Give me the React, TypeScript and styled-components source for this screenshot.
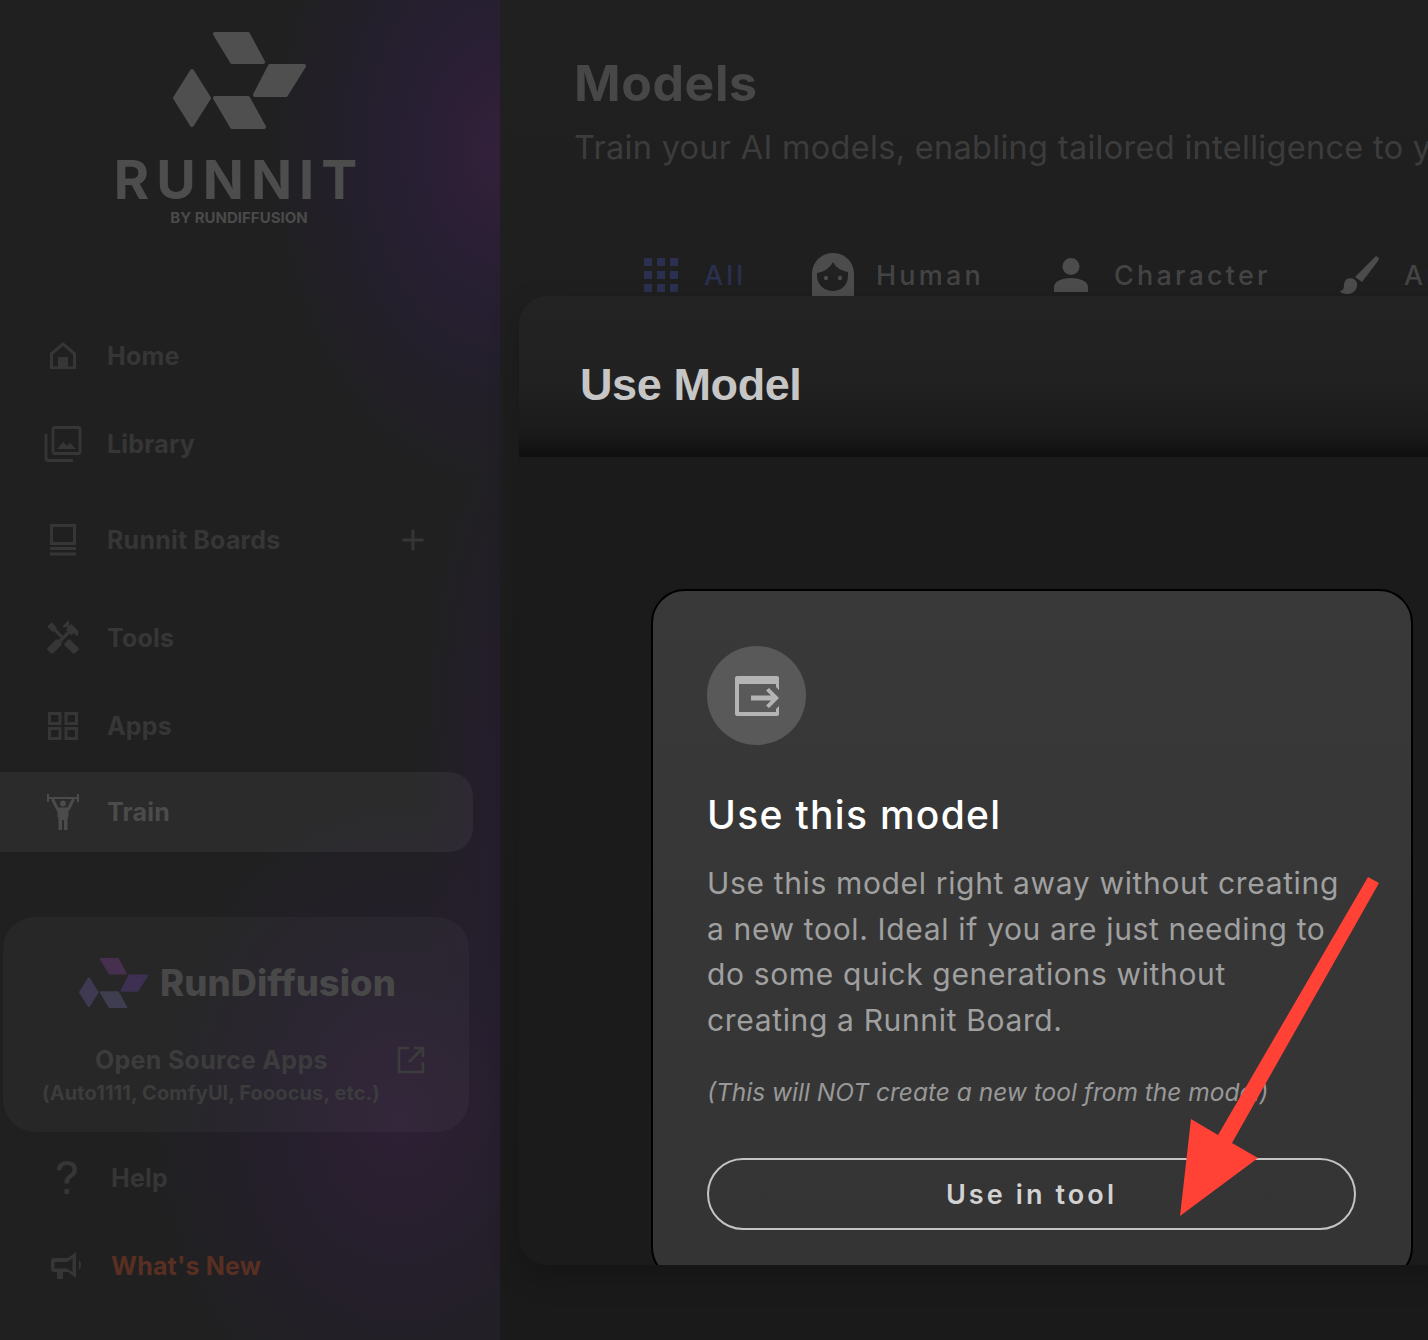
import styled, { createGlobalStyle } from "styled-components";
import { Plus } from "lucide-react";

const GlobalStyle = createGlobalStyle`
  html, body { margin: 0; padding: 0; background: #1e1e1f; }
  body { font-family: "Inter", "Liberation Sans", sans-serif; }
  * { box-sizing: border-box; }
`;

const Page = styled.div`
  position: relative;
  display: flex;
  width: 1428px;
  height: 1340px;
  overflow: hidden;
`;

const Sidebar = styled.aside`
  width: 500px;
  flex: none;
  display: flex;
  flex-direction: column;
  background:
    radial-gradient(ellipse 230px 340px at 500px 150px, #33203a 0%, rgba(40, 30, 55, 0.75) 45%, rgba(33, 32, 36, 0) 100%),
    radial-gradient(ellipse 250px 320px at 400px 1120px, #2e1f35 0%, rgba(40, 30, 50, 0.6) 50%, rgba(33, 32, 36, 0) 100%),
    radial-gradient(ellipse 90px 380px at 510px 800px, #261d30 0%, rgba(33, 32, 36, 0) 100%),
    #202021;
`;

const Brand = styled.div`
  height: 312px;
  padding-top: 32px;
  display: flex;
  flex-direction: column;
  align-items: center;
  padding-right: 22px;
`;

const LogoWord = styled.div`
  font-family: "Inter", sans-serif;
  font-weight: 700;
  font-size: 54px;
  line-height: 42px;
  letter-spacing: 7px;
  color: #4d4d4d;
  margin-top: 30px;
`;

const LogoSub = styled.div`
  font-family: "Inter", sans-serif;
  font-weight: 700;
  font-size: 15px;
  line-height: 18px;
  color: #4a4a4a;
  margin-top: 8px;
`;

const Nav = styled.nav`
  display: flex;
  flex-direction: column;
`;

const NavItem = styled.div<{ $height: number; $active?: boolean; $indent?: number; $after?: number }>`
  display: flex;
  align-items: center;
  width: 473px;
  height: ${({ $height }) => $height}px;
  margin-bottom: ${({ $after }) => $after ?? 0}px;
  padding-left: ${({ $indent }) => $indent ?? 44}px;
  padding-right: 44px;
  border-radius: 0 24px 24px 0;
  background: ${({ $active }) => ($active ? "rgba(255, 255, 255, 0.05)" : "transparent")};
  color: ${({ $active }) => ($active ? "#4b4b4b" : "#363637")};
`;

const NavIcon = styled.span`
  width: 38px;
  height: 38px;
  flex: none;
  display: flex;
  align-items: center;
  justify-content: center;
  margin-right: 25px;
`;

const NavLabel = styled.span<{ $accent?: boolean }>`
  flex: 1;
  font-family: "Inter", sans-serif;
  font-size: 25px;
  font-weight: 700;
  letter-spacing: 0.2px;
  color: ${({ $accent }) => ($accent ? "#592f22" : "inherit")};
`;

const PromoCard = styled.div`
  margin: 65px 0 0 3px;
  width: 466px;
  height: 215px;
  border-radius: 32px;
  background: rgba(255, 255, 255, 0.03);
  display: flex;
  flex-direction: column;
  align-items: center;
  padding-top: 41px;
`;

const PromoBrand = styled.div`
  display: flex;
  align-items: center;
  gap: 12px;
  margin-left: 3px;
`;

const PromoName = styled.span`
  font-family: "Inter", sans-serif;
  font-size: 36.5px;
  font-weight: 800;
  line-height: 50px;
  color: #484848;
`;

const PromoLine = styled.div`
  display: flex;
  align-items: center;
  width: 100%;
  margin-top: 34px;
  padding: 0 44px 0 92px;
  justify-content: space-between;
  color: #3c3c3d;
`;

const PromoTitle = styled.span`
  font-size: 25px;
  font-weight: 700;
  letter-spacing: 0.3px;
  line-height: 36px;
`;

const PromoNote = styled.div`
  font-size: 20px;
  font-weight: 700;
  letter-spacing: 0.1px;
  line-height: 28px;
  color: #3c3c3d;
  margin-top: 1px;
  margin-right: 50px;
`;

const Main = styled.main`
  flex: 1;
  min-width: 0;
  padding: 52px 0 0 74px;
  white-space: nowrap;
  background: linear-gradient(180deg, #202020 0%, #1e1e1e 40%, #1a1a1a 100%);
`;

const PageTitle = styled.h1`
  margin: 0;
  font-family: "Inter", sans-serif;
  font-size: 50px;
  font-weight: 700;
  line-height: 62px;
  letter-spacing: 0.6px;
  color: #474747;
`;

const PageSub = styled.p`
  margin: 4px 0 0;
  font-size: 32.5px;
  font-weight: 400;
  line-height: 60px;
  letter-spacing: 0.3px;
  color: #3c3c3c;
`;

const Tabs = styled.div`
  display: flex;
  align-items: center;
  margin-top: 75px;
  padding-left: 70px;
`;

const Tab = styled.div<{ $gap: number; $width: number; $color?: string }>`
  display: flex;
  align-items: center;
  flex: none;
  width: ${({ $width }) => $width}px;
  gap: ${({ $gap }) => $gap}px;
  font-family: "Inter", sans-serif;
  font-size: 27px;
  font-weight: 500;
  letter-spacing: 3.2px;
  color: ${({ $color }) => $color ?? "#444445"};
`;

const Modal = styled.section`
  position: absolute;
  left: 519px;
  top: 296px;
  width: 1000px;
  height: 969px;
  overflow: hidden;
  border-radius: 28px 0 0 28px;
  background: #1b1b1b;
  box-shadow: 0 12px 30px rgba(0, 0, 0, 0.22);
`;

const ModalHeader = styled.header`
  height: 161px;
  display: flex;
  align-items: center;
  padding-left: 61px;
  background: linear-gradient(180deg, #232323 0%, #212121 55%, #1a1a1a 85%, #0f0f0f 100%);
`;

const ModalTitle = styled.h2`
  margin: 0;
  font-family: "Liberation Sans", sans-serif;
  font-size: 45px;
  font-weight: 700;
  letter-spacing: -0.4px;
  color: #c6c6c6;
  position: relative;
  top: 8px;
`;

const ModalBody = styled.div`
  padding: 132px 0 0 132px;
`;

const OptionCard = styled.article`
  width: 762px;
  height: 692px;
  padding: 55px 54px;
  border: 2px solid #000000;
  border-radius: 34px;
  background: linear-gradient(180deg, #393939 0%, #373737 30%, #343434 100%);
`;

const IconCircle = styled.div`
  width: 99px;
  height: 99px;
  border-radius: 50%;
  background: #595959;
  display: flex;
  align-items: center;
  justify-content: center;
`;

const OptionTitle = styled.h3`
  margin: 42px 0 0;
  font-family: "Inter", sans-serif;
  font-size: 39px;
  font-weight: 500;
  line-height: 56px;
  letter-spacing: 1.3px;
  color: #ffffff;
`;

const OptionText = styled.p`
  margin: 18px 0 0;
  width: 636px;
  font-size: 30px;
  font-weight: 400;
  line-height: 45.6px;
  letter-spacing: 0.65px;
  color: #a0a0a0;
`;

const OptionNote = styled.p`
  margin: 31px 0 0;
  font-size: 24.5px;
  font-style: italic;
  line-height: 36px;
  color: #989898;
  white-space: nowrap;
`;

const ActionButton = styled.button`
  display: block;
  width: 649px;
  height: 72px;
  margin-top: 48px;
  border: 2px solid #c4c4c4;
  border-radius: 36px;
  background: transparent;
  font-family: "Inter", sans-serif;
  font-size: 27px;
  font-weight: 600;
  letter-spacing: 3.1px;
  color: #d2d2d2;
`;

const ArrowOverlay = styled.svg`
  position: absolute;
  left: 1170px;
  top: 870px;
  width: 220px;
  height: 350px;
  pointer-events: none;
`;

const LogoMark = ({ size, colors }: { size: number; colors: string[] }) => (
  <svg width={size} height={size * (97 / 133)} viewBox="0 0 133 97">
    <g strokeWidth="4" strokeLinejoin="round">
      <polygon points="42,2 75,2 90,30 59,30" fill={colors[0]} stroke={colors[0]} />
      <polygon points="97,34 131,34 113,63 82,63" fill={colors[1]} stroke={colors[1]} />
      <polygon points="19,39 36,66 19,93 2,66" fill={colors[2]} stroke={colors[2]} />
      <polygon points="42,66 75,66 91,95 59,95" fill={colors[3]} stroke={colors[3]} />
    </g>
  </svg>
);

const HomeIcon = () => (
  <svg width="28" height="28" viewBox="0 0 28 28" fill="currentColor">
    <path fillRule="evenodd" d="M14 0L27 11V27H1V11ZM14 4L4 12.500V24.500H9V15H19V24.500H24V12.500Z" />
  </svg>
);

const LibraryIcon = () => (
  <svg width="38" height="36" viewBox="0 0 38 36" fill="none" stroke="currentColor" strokeWidth="2.800">
    <rect x="9" y="1.500" width="27" height="26" rx="2" />
    <path d="M2 8V32Q2 34.500 4.500 34.500H29" />
    <path d="M13 23L19 16L23 20L26 17L32 23Z" fill="currentColor" stroke="none" />
  </svg>
);

const BoardIcon = () => (
  <svg width="28" height="32" viewBox="0 0 26 32" fill="none" stroke="currentColor" strokeWidth="3">
    <rect x="1.500" y="1.500" width="23" height="18" />
    <path d="M0 24.500H26M0 30H26" />
  </svg>
);

const ToolsIcon = () => (
  <svg width="38" height="38" viewBox="0 0 24 24" fill="currentColor">
    <path d="M21.670 18.170l-5.300-5.300h-.990l-2.540 2.540v.990l5.300 5.300c.390.390 1.020.390 1.410 0l2.120-2.120c.390-.380.390-1.020 0-1.410z" />
    <path d="M17.340 10.190l1.410-1.410 2.120 2.120c1.170-1.170 1.170-3.070 0-4.240l-3.540-3.540-1.410 1.410V1.710l-.700-.710-3.540 3.540.710.710h2.830l-1.410 1.410 1.060 1.060-2.890 2.890-4.130-4.130V5.060L4.830 2.040 2 4.870 5.030 7.900h1.410l4.130 4.130-.850.850H7.600l-5.300 5.300c-.390.390-.390 1.020 0 1.410l2.120 2.120c.390.390 1.020.390 1.410 0l5.300-5.300v-2.120l5.150-5.150 1.060 1.050z" />
  </svg>
);

const AppsIcon = () => (
  <svg width="30" height="28" viewBox="0 0 30 28" fill="none" stroke="currentColor" strokeWidth="3">
    <rect x="1.500" y="1.500" width="10.500" height="10" />
    <rect x="18" y="1.500" width="10.500" height="10" />
    <rect x="1.500" y="16.500" width="10.500" height="10" />
    <rect x="18" y="16.500" width="10.500" height="10" />
  </svg>
);

const TrainIcon = () => (
  <svg width="34" height="36" viewBox="0 0 34 36" fill="currentColor">
    <path d="M1 0h2v3h28V0h2v8h-2V5H3v3H1z" />
    <circle cx="17" cy="9.500" r="3" />
    <path d="M6.500 5L11.500 15H22.500L27.500 5" fill="none" stroke="currentColor" strokeWidth="3" />
    <path d="M11.500 14h11v8l-1 3v11h-3.500V26h-2v10H12.500V25l-1-3z" />
  </svg>
);

const HelpIcon = () => (
  <svg width="22" height="34" viewBox="0 0 22 34" fill="currentColor">
    <path d="M1 9C1 3.500 5 0 11 0s10 3.500 10 8.500c0 4-2 6-5 8-2 1.500-3 2.500-3 5v1H8.500v-1.500c0-3.500 1.500-5 4-7 2.500-1.800 4-3 4-5.500 0-2.800-2.300-4.500-5.500-4.500S5.500 6 5.300 9.500z" />
    <rect x="8.500" y="28" width="4.500" height="5" />
  </svg>
);

const MegaphoneIcon = () => (
  <svg width="32" height="28" viewBox="0 0 32 28" fill="currentColor">
    <path fillRule="evenodd" d="M25 0v26l-8-6h-5v7H6v-7H3a3 3 0 0 1-3-3V9a3 3 0 0 1 3-3h14zM21.500 6.500L16 10H3.500v6.500H16l5.500 3.500z" />
    <path d="M28 8q4 5 0 10z" />
  </svg>
);

const OpenIcon = () => (
  <svg width="28" height="28" viewBox="0 0 28 28" fill="none" stroke="currentColor" strokeWidth="2.600">
    <path d="M12 2H2V26H26V16" />
    <path d="M12 16L26 2M17 2H26V11" />
  </svg>
);

const GridIcon = () => (
  <svg width="34" height="34" viewBox="0 0 34 34" fill="#2b3050">
    {[0, 13, 26].map((y) =>
      [0, 13, 26].map((x) => <rect key={`${x}-${y}`} x={x} y={y} width="8" height="8" />)
    )}
  </svg>
);

const FaceIcon = () => (
  <svg width="42" height="44" viewBox="0 0 42 44">
    <path d="M0 44V21C0 9 9 0 21 0s21 9 21 21v23z" fill="#4c4c4c" />
    <path d="M21 9c3 6 9 9 15 10v4c0 9-7 15-15 15S5 32 5 23v-3c7-1 13-5 16-11z" fill="#212121" />
    <circle cx="14" cy="25" r="2.200" fill="#4c4c4c" />
    <circle cx="28" cy="25" r="2.200" fill="#4c4c4c" />
  </svg>
);

const PersonIcon = () => (
  <svg width="34" height="34" viewBox="0 0 34 34" fill="#4c4c4c">
    <circle cx="17" cy="8.500" r="8.500" />
    <path d="M0 34v-5c0-6 9-9 17-9s17 3 17 9v5z" />
  </svg>
);

const BrushIcon = () => (
  <svg width="40" height="38" viewBox="0 0 40 38" fill="#4c4c4c">
    <path d="M36 0l3 2-1 3-16 21-7-5z" />
    <path d="M7 23c4-2 9 0 10 4 1 5-3 11-9 11-4 0-8-1-8-3 3 0 4-3 4-6 0-2 1-5 3-6z" />
  </svg>
);

const TabIcon = styled.span`
  display: flex;
  flex: none;
`;

const navItems = [
  { label: "Home", icon: <HomeIcon />, height: 88, after: 0 },
  { label: "Library", icon: <LibraryIcon />, height: 88, after: 0 },
  { label: "Runnit Boards", icon: <BoardIcon />, height: 104, after: 0 },
  { label: "Tools", icon: <ToolsIcon />, height: 92, after: 0 },
  { label: "Apps", icon: <AppsIcon />, height: 84, after: 4 },
];

const App = () => {
  return (
    <Page>
      <GlobalStyle />
      <Sidebar>
        <Brand>
          <LogoMark size={133} colors={["#4f4f4f", "#4f4f4f", "#4f4f4f", "#4f4f4f"]} />
          <LogoWord>RUNNIT</LogoWord>
          <LogoSub>BY RUNDIFFUSION</LogoSub>
        </Brand>
        <Nav>
          {navItems.map((item) => (
            <NavItem key={item.label} $height={item.height} $after={item.after}>
              <NavIcon>{item.icon}</NavIcon>
              <NavLabel>{item.label}</NavLabel>
              {item.label === "Runnit Boards" && <Plus size={32} strokeWidth={2.2} />}
            </NavItem>
          ))}
          <NavItem $height={80} $active>
            <NavIcon><TrainIcon /></NavIcon>
            <NavLabel>Train</NavLabel>
          </NavItem>
        </Nav>
        <PromoCard>
          <PromoBrand>
            <LogoMark size={69} colors={["#47304f", "#3d3052", "#3f3a52", "#3e3e50"]} />
            <PromoName>RunDiffusion</PromoName>
          </PromoBrand>
          <PromoLine>
            <PromoTitle>Open Source Apps</PromoTitle>
            <OpenIcon />
          </PromoLine>
          <PromoNote>(Auto1111, ComfyUI, Fooocus, etc.)</PromoNote>
        </PromoCard>
        <Nav>
          <NavItem $height={92} $indent={48}>
            <NavIcon><HelpIcon /></NavIcon>
            <NavLabel>Help</NavLabel>
          </NavItem>
          <NavItem $height={84} $indent={48}>
            <NavIcon><MegaphoneIcon /></NavIcon>
            <NavLabel $accent>What's New</NavLabel>
          </NavItem>
        </Nav>
      </Sidebar>
      <Main>
        <PageTitle>Models</PageTitle>
        <PageSub>Train your AI models, enabling tailored intelligence to your needs</PageSub>
        <Tabs>
          <Tab $width={168} $gap={26} $color="#2b3050">
            <TabIcon><GridIcon /></TabIcon>All
          </Tab>
          <Tab $width={242} $gap={22}>
            <TabIcon><FaceIcon /></TabIcon>Human
          </Tab>
          <Tab $width={286} $gap={26}>
            <TabIcon><PersonIcon /></TabIcon>Character
          </Tab>
          <Tab $width={200} $gap={24}>
            <TabIcon><BrushIcon /></TabIcon>Art
          </Tab>
        </Tabs>
      </Main>
      <Modal>
        <ModalHeader>
          <ModalTitle>Use Model</ModalTitle>
        </ModalHeader>
        <ModalBody>
          <OptionCard>
            <IconCircle>
              <svg width="44" height="40" viewBox="0 0 44 40">
                <path fillRule="evenodd" d="M2 0h40a2 2 0 0 1 2 2v12l-3-3V8H4v28h37v-3l3-3v8a2 2 0 0 1-2 2H2a2 2 0 0 1-2-2V2a2 2 0 0 1 2-2z" fill="#b4b4b4" />
                <path d="M16 19.500h20l-5-5 3-2.500 10 10-10 10-3-2.500 5-5H16z" fill="#b4b4b4" />
              </svg>
            </IconCircle>
            <OptionTitle>Use this model</OptionTitle>
            <OptionText>
              Use this model right away without creating a new tool. Ideal if you are just needing to do some quick generations without creating a Runnit Board.
            </OptionText>
            <OptionNote>(This will NOT create a new tool from the model)</OptionNote>
            <ActionButton>Use in tool</ActionButton>
          </OptionCard>
        </ModalBody>
      </Modal>
      <ArrowOverlay viewBox="1170 870 220 350">
        <path d="M1379 883L1368 877L1218 1135L1191 1119L1180 1216L1258 1158L1232 1143Z" fill="#ff4136" />
      </ArrowOverlay>
    </Page>
  );
};

export default App;
